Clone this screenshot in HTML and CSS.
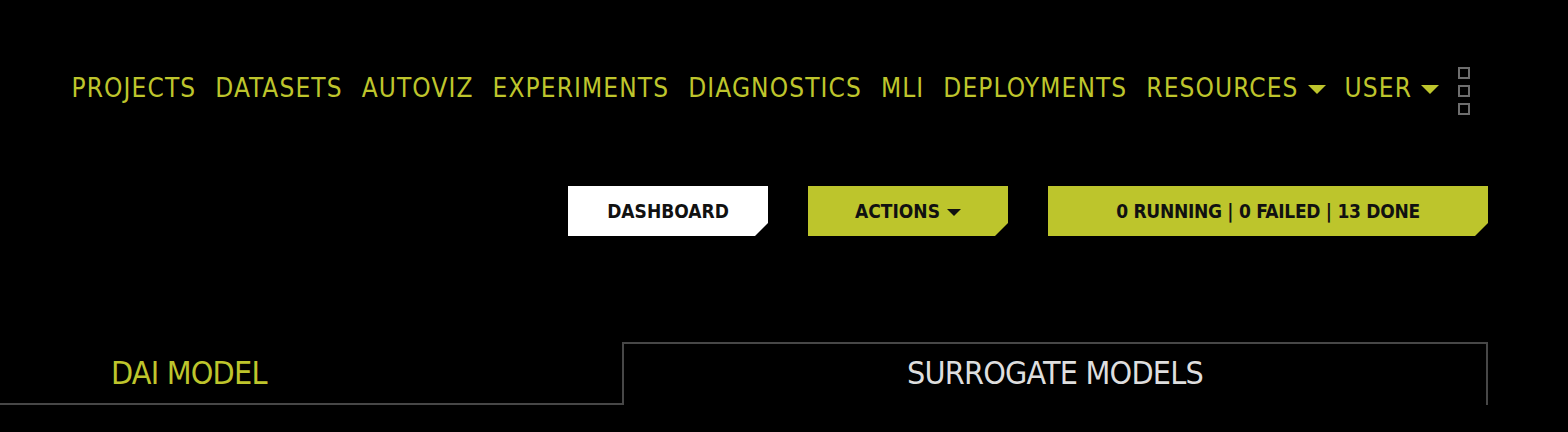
FILE: index.html
```html
<!DOCTYPE html>
<html lang="en">
<head>
<meta charset="utf-8">
<title>MLI</title>
<link rel="stylesheet" href="styles.css">
</head>
<body>
<header class="topnav">
  <nav class="nav-links">
    <a class="nav-item">PROJECTS</a>
    <a class="nav-item">DATASETS</a>
    <a class="nav-item">AUTOVIZ</a>
    <a class="nav-item">EXPERIMENTS</a>
    <a class="nav-item">DIAGNOSTICS</a>
    <a class="nav-item">MLI</a>
    <a class="nav-item">DEPLOYMENTS</a>
    <a class="nav-item">RESOURCES<span class="caret"></span></a>
    <a class="nav-item">USER<span class="caret"></span></a>
    <div class="grid-icon"><span></span><span></span><span></span></div>
  </nav>
</header>
<section class="toolbar">
  <button class="btn btn-white">DASHBOARD</button>
  <button class="btn btn-lime">ACTIONS<span class="caret caret-dark"></span></button>
  <button class="btn btn-lime btn-wide">0 RUNNING | 0 FAILED | 13 DONE</button>
</section>
<section class="tabs">
  <div class="tab tab-left">DAI MODEL</div>
  <div class="tab tab-right">SURROGATE MODELS</div>
</section>
</body>
</html>
```
FILE: styles.css
```css
html, body {
  margin: 0;
  padding: 0;
  background: #000;
}
body {
  width: 1568px;
  height: 432px;
  overflow: hidden;
  font-family: "DejaVu Sans Condensed", "DejaVu Sans", sans-serif;
}
.topnav {
  padding-top: 67px;
  padding-right: 98px;
}
.nav-links {
  display: flex;
  justify-content: flex-end;
  align-items: flex-start;
  gap: 19px;
  height: 48px;
}
.nav-item {
  margin-top: 8px;
  color: #bec52c;
  font-size: 26px;
  line-height: 26px;
  letter-spacing: 1.1px;
  display: flex;
  align-items: center;
  white-space: nowrap;
}
.caret {
  display: inline-block;
  width: 0;
  height: 0;
  border-left: 9px solid transparent;
  border-right: 9px solid transparent;
  border-top: 9px solid #bec52c;
  margin-left: 9px;
  margin-top: 2px;
}
.grid-icon {
  display: flex;
  flex-direction: column;
  gap: 6px;
  width: 12px;
}
.grid-icon span {
  width: 8px;
  height: 8px;
  border: 2px solid #6e6e6e;
}
.toolbar {
  margin-top: 71px;
  padding-right: 80px;
  display: flex;
  justify-content: flex-end;
  gap: 40px;
}
.btn {
  width: 200px;
  height: 50px;
  border: none;
  padding: 0;
  font-family: "DejaVu Sans Condensed", "DejaVu Sans", sans-serif;
  font-weight: bold;
  font-size: 19px;
  color: #111;
  display: flex;
  align-items: center;
  justify-content: center;
  clip-path: polygon(0 0, 100% 0, 100% calc(100% - 13px), calc(100% - 13px) 100%, 0 100%);
}
.btn-white { background: #fff; }
.btn-lime { background: #bdc52c; }
.btn-wide {
  width: 440px;
  letter-spacing: -0.3px;
}
.caret-dark {
  border-left-width: 7px;
  border-right-width: 7px;
  border-top: 7px solid #111;
  margin-left: 7px;
}
.tabs {
  margin-top: 106px;
  display: flex;
  height: 63px;
}
.tab {
  box-sizing: border-box;
  font-family: "Liberation Sans Narrow", "DejaVu Sans Condensed", sans-serif;
  font-size: 32px;
  line-height: 32px;
  letter-spacing: -0.8px;
  white-space: nowrap;
}
.tab-left {
  width: 622px;
  color: #bec52c;
  padding-top: 15px;
  padding-left: 111px;
  border-bottom: 2px solid #474747;
}
.tab-right {
  width: 866px;
  color: #dedede;
  text-align: center;
  padding-top: 13px;
  border: 2px solid #474747;
  border-bottom: none;
}
```
